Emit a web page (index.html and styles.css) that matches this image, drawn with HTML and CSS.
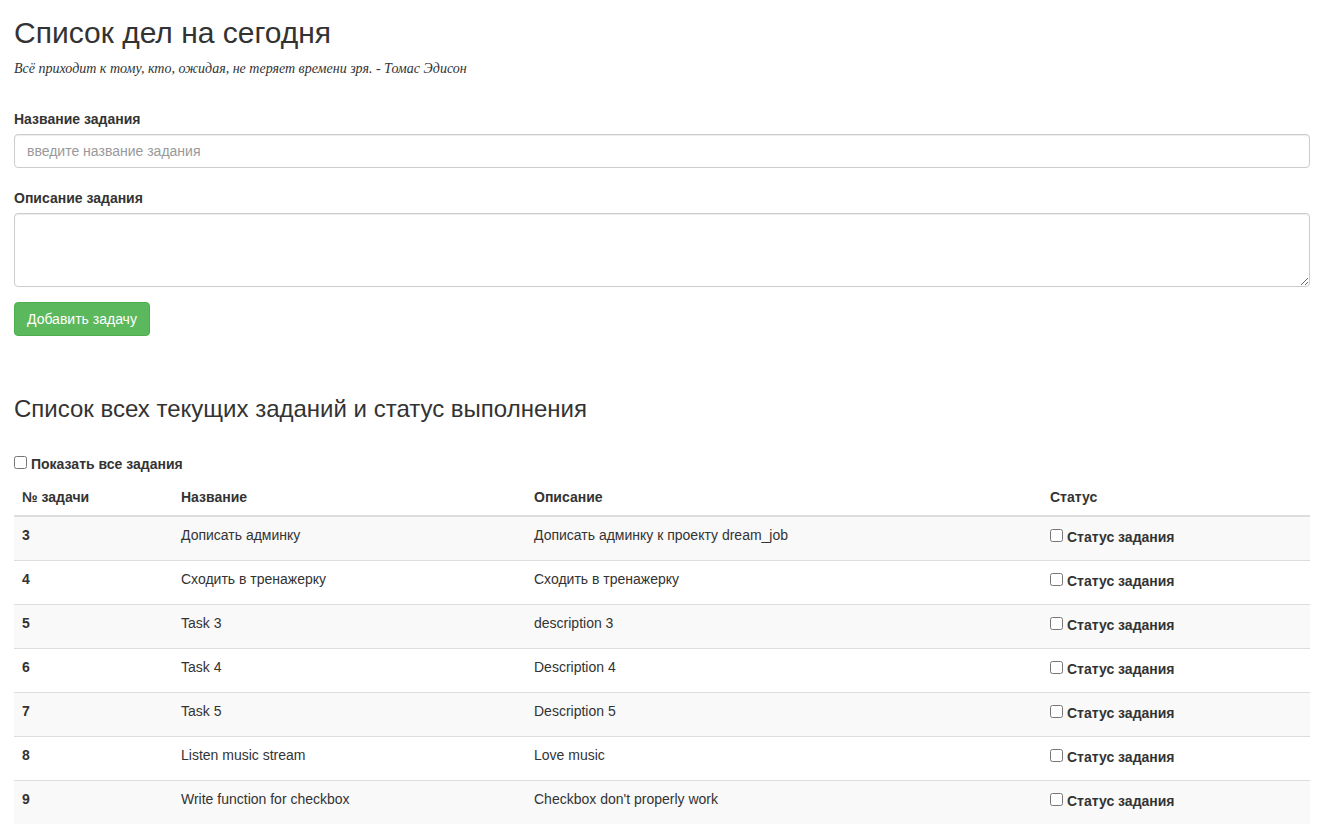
FILE: index.html
```html
<!DOCTYPE html>
<html lang="ru">
<head>
<meta charset="utf-8">
<title>Список дел на сегодня</title>
<link rel="stylesheet" href="styles.css">
</head>
<body>
<div class="page">
  <h1 class="title">Список дел на сегодня</h1>
  <p class="quote">Всё приходит к тому, кто, ожидая, не теряет времени зря. - Томас Эдисон</p>

  <form class="task-form">
    <div class="form-group first">
      <label class="form-label" for="name">Название задания</label>
      <input class="form-control" id="name" type="text" placeholder="введите название задания">
    </div>
    <div class="form-group">
      <label class="form-label" for="desc">Описание задания</label>
      <textarea class="form-control area" id="desc" rows="3"></textarea>
    </div>
    <button class="btn-success" type="button">Добавить задачу</button>
  </form>

  <h3 class="subtitle">Список всех текущих заданий и статус выполнения</h3>

  <label class="check-label show-all"><input type="checkbox" class="check">Показать все задания</label>

  <table class="tasks">
    <colgroup>
      <col class="c1"><col class="c2"><col class="c3"><col class="c4">
    </colgroup>
    <thead>
      <tr><th>№ задачи</th><th>Название</th><th>Описание</th><th>Статус</th></tr>
    </thead>
    <tbody>
      <tr><th>3</th><td>Дописать админку</td><td>Дописать админку к проекту dream_job</td><td><label class="check-label status"><input type="checkbox" class="check">Статус задания</label></td></tr>
      <tr><th>4</th><td>Сходить в тренажерку</td><td>Сходить в тренажерку</td><td><label class="check-label status"><input type="checkbox" class="check">Статус задания</label></td></tr>
      <tr><th>5</th><td>Task 3</td><td>description 3</td><td><label class="check-label status"><input type="checkbox" class="check">Статус задания</label></td></tr>
      <tr><th>6</th><td>Task 4</td><td>Description 4</td><td><label class="check-label status"><input type="checkbox" class="check">Статус задания</label></td></tr>
      <tr><th>7</th><td>Task 5</td><td>Description 5</td><td><label class="check-label status"><input type="checkbox" class="check">Статус задания</label></td></tr>
      <tr><th>8</th><td>Listen music stream</td><td>Love music</td><td><label class="check-label status"><input type="checkbox" class="check">Статус задания</label></td></tr>
      <tr><th>9</th><td>Write function for checkbox</td><td>Checkbox don't properly work</td><td><label class="check-label status"><input type="checkbox" class="check">Статус задания</label></td></tr>
    </tbody>
  </table>
</div>
</body>
</html>
```
FILE: styles.css
```css
* { box-sizing: border-box; }

html, body {
  margin: 0;
  padding: 0;
  background: #fff;
}

body {
  font-family: "Liberation Sans", Arial, sans-serif;
  font-size: 14px;
  line-height: 20px;
  color: #333;
}

.page {
  padding: 0 11px 10px 14px;
}

.title {
  margin: 16px 0 10px;
  font-size: 30px;
  line-height: 33px;
  font-weight: 400;
}

.quote {
  margin: 0;
  font-family: "Liberation Serif", "Times New Roman", serif;
  font-style: italic;
  font-size: 14px;
  line-height: 19px;
}

.task-form {
  margin-top: 31px;
}

.form-group {
  margin-bottom: 20px;
}

.form-group + .form-group {
  margin-bottom: 15px;
}

.form-label {
  display: block;
  margin-bottom: 5px;
  font-weight: 700;
}

.form-control {
  display: block;
  width: 100%;
  height: 34px;
  padding: 6px 12px;
  font-family: inherit;
  font-size: 14px;
  line-height: 20px;
  color: #555;
  background: #fff;
  border: 1px solid #ccc;
  border-radius: 4px;
  box-shadow: inset 0 1px 1px rgba(0, 0, 0, .075);
  margin: 0;
}

.form-control::placeholder {
  color: #999;
}

.area {
  height: 74px;
  resize: vertical;
}

.btn-success {
  display: inline-block;
  margin: 0;
  padding: 6px 12px;
  font-family: inherit;
  font-size: 14px;
  line-height: 20px;
  color: #fff;
  background: #5cb85c;
  border: 1px solid #4cae4c;
  border-radius: 4px;
  cursor: pointer;
  vertical-align: top;
}

.subtitle {
  margin: 59px 0 0;
  font-size: 24px;
  line-height: 27px;
  font-weight: 400;
}

.check-label {
  font-weight: 700;
}

.show-all {
  display: block;
  margin-top: 32px;
  margin-bottom: 5px;
}

.check {
  width: 13px;
  height: 13px;
  margin: 0 4px 0 0;
  vertical-align: baseline;
}

.status {
  display: block;
  margin: 2px 0 5px;
}

.tasks {
  width: 100%;
  table-layout: fixed;
  border-collapse: collapse;
  border-spacing: 0;
}

.c1 { width: 159px; }
.c2 { width: 353px; }
.c3 { width: 516px; }
.c4 { width: 268px; }

.tasks th,
.tasks td {
  padding: 8px;
  text-align: left;
  vertical-align: top;
  line-height: 20px;
}

.tasks thead th {
  font-weight: 700;
  border-bottom: 2px solid #ddd;
}

.tasks tbody th,
.tasks tbody td {
  border-top: 1px solid #ddd;
}

.tasks tbody th {
  font-weight: 700;
}

.tasks tbody td {
  font-weight: 400;
}

.tasks tbody tr:nth-child(odd) {
  background: #f9f9f9;
}

.tasks tbody tr:first-child th,
.tasks tbody tr:first-child td {
  border-top: 0;
}
```
